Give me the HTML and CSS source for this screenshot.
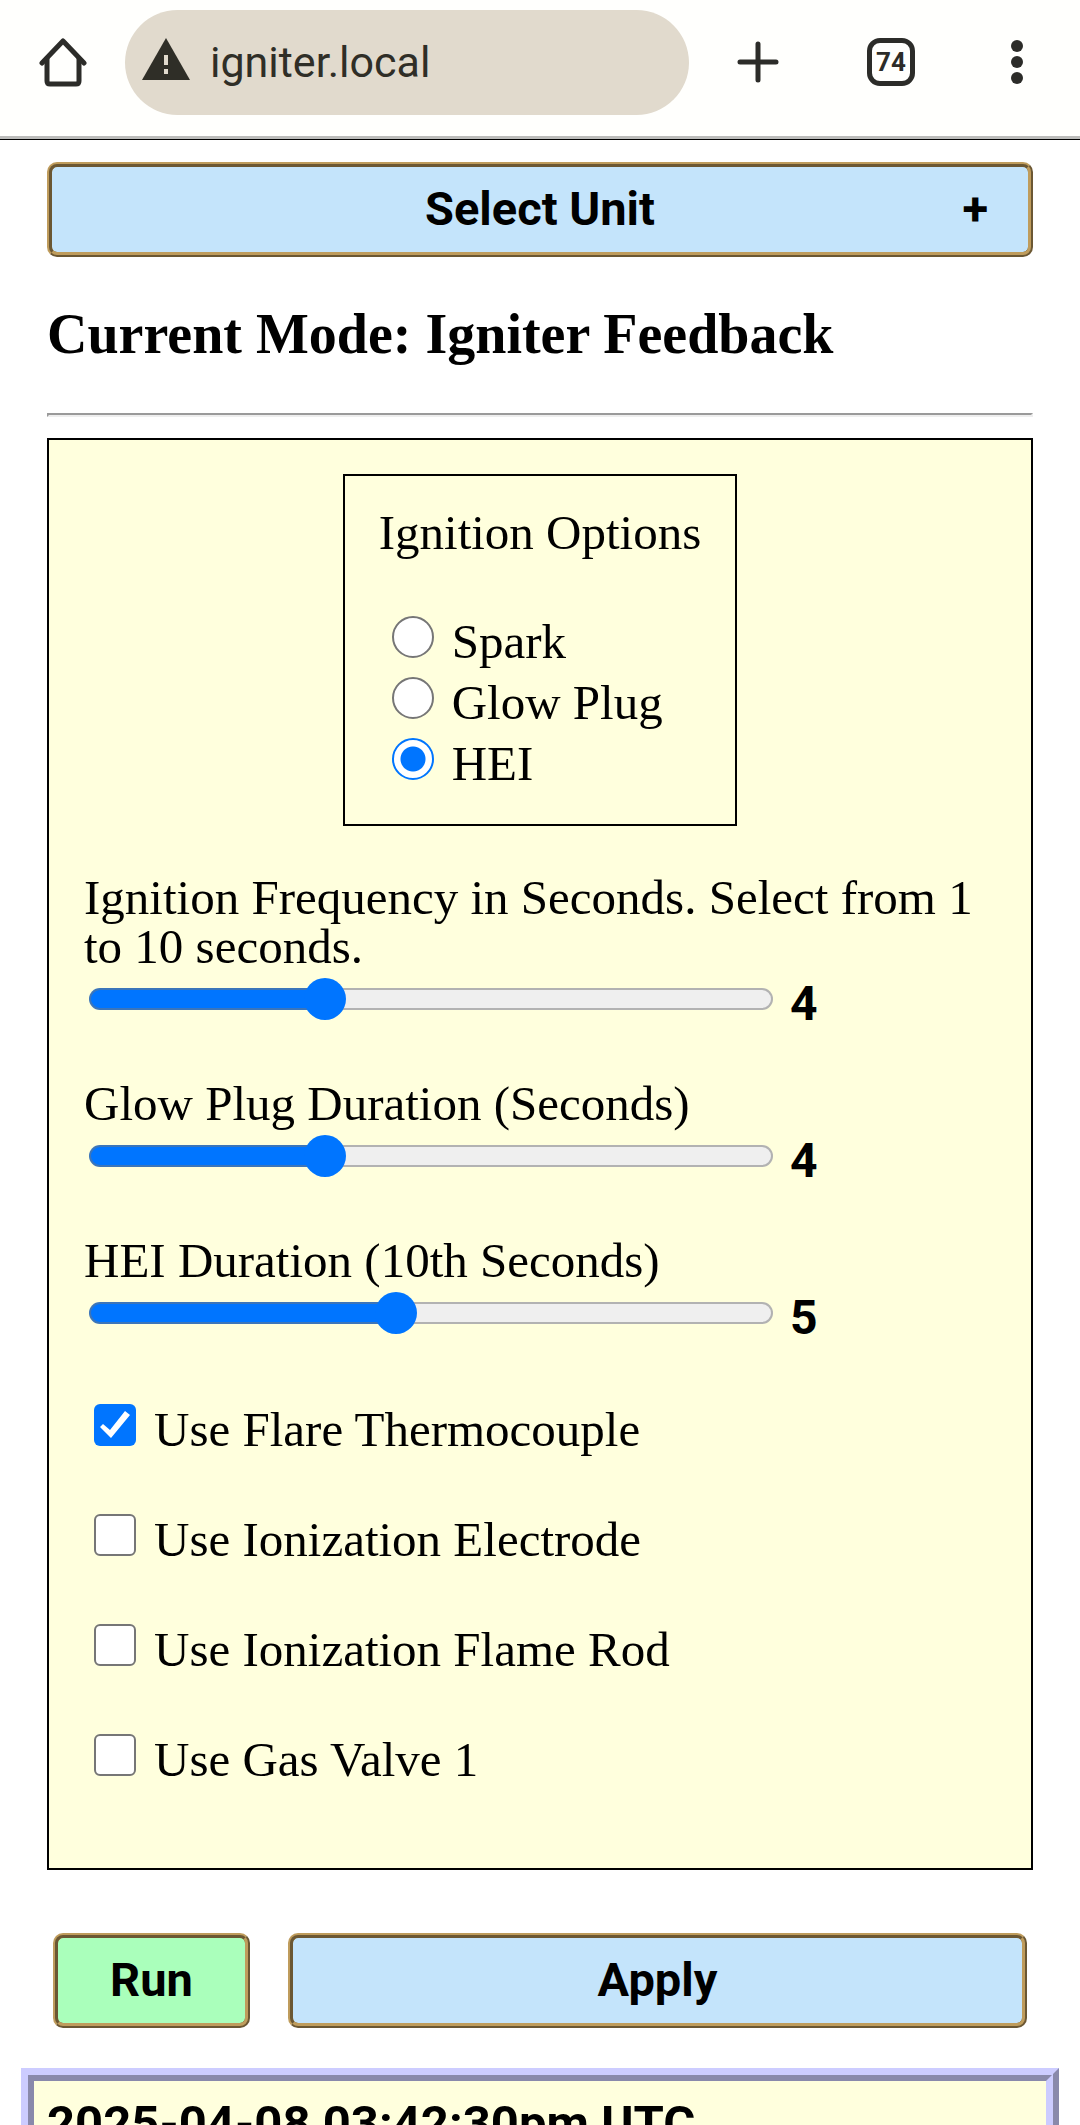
FILE: index.html
```html
<!DOCTYPE html>
<html lang="en">
<head>
  <meta charset="UTF-8">
  <meta name="viewport" content="width=device-width, initial-scale=1.0">
  <title>Igniter</title>
  <link rel="stylesheet" href="styles.css">
</head>
<body>

<header class="toolbar">
  <button class="icon-btn" aria-label="Home">
    <svg width="48" height="50" viewBox="0 0 48 50" fill="none" stroke="#2c2c29" stroke-width="5" stroke-linecap="round" stroke-linejoin="round">
      <path d="M3 26 L24 4 L45 26"/>
      <path d="M8 22 V44 Q8 47 11 47 H37 Q40 47 40 44 V22"/>
    </svg>
  </button>
  <div class="address">
    <svg width="48" height="42" viewBox="0 0 48 42">
      <path d="M24 0 L48 42 H0 Z" fill="#2f2e27"/>
      <path d="M22 17 H26 V27 H22 Z M22 31 H26 V36 H22 Z" fill="#e1dacd"/>
    </svg>
    <span>igniter.local</span>
  </div>
  <div class="actions">
    <button class="icon-btn" aria-label="New tab">
      <svg width="42" height="42" viewBox="0 0 42 42" stroke="#2c2c29" stroke-width="5" stroke-linecap="round">
        <path d="M21 3 V39 M3 21 H39"/>
      </svg>
    </button>
    <button class="icon-btn tabs">74</button>
    <button class="icon-btn menu" aria-label="Menu">
      <svg width="12" height="44" viewBox="0 0 12 44" fill="#2c2c29">
        <circle cx="6" cy="6" r="6"/>
        <circle cx="6" cy="22" r="6"/>
        <circle cx="6" cy="38" r="6"/>
      </svg>
    </button>
  </div>
</header>

<main>
  <!-- Unit selector -->
  <button class="btn select-unit"><span>Select Unit</span><span class="plus">+</span></button>

  <h1>Current Mode: Igniter Feedback</h1>
  <hr>

  <!-- Settings -->
  <form class="panel" id="settings">
    <div class="options" role="radiogroup" aria-labelledby="options-title">
      <div class="options-title" id="options-title">Ignition Options</div>
      <label class="choice"><input type="radio" name="ignition" value="spark">Spark</label>
      <label class="choice"><input type="radio" name="ignition" value="glow">Glow Plug</label>
      <label class="choice"><input type="radio" name="ignition" value="hei" checked>HEI</label>
    </div>

    <div class="slider">
      <label for="freq">Ignition Frequency in Seconds. Select from 1 to 10 seconds.</label>
      <div class="slider-row">
        <input type="range" id="freq" min="1" max="10" value="4" style="--value: 4">
        <output for="freq">4</output>
      </div>
    </div>
    <div class="slider">
      <label for="glow">Glow Plug Duration (Seconds)</label>
      <div class="slider-row">
        <input type="range" id="glow" min="1" max="10" value="4" style="--value: 4">
        <output for="glow">4</output>
      </div>
    </div>
    <div class="slider">
      <label for="hei">HEI Duration (10th Seconds)</label>
      <div class="slider-row">
        <input type="range" id="hei" min="1" max="10" value="5" style="--value: 5">
        <output for="hei">5</output>
      </div>
    </div>

    <div class="checks">
      <label class="choice"><input type="checkbox" checked>Use Flare Thermocouple</label>
      <label class="choice"><input type="checkbox">Use Ionization Electrode</label>
      <label class="choice"><input type="checkbox">Use Ionization Flame Rod</label>
      <label class="choice"><input type="checkbox">Use Gas Valve 1</label>
    </div>
  </form>

  <div class="buttons">
    <button class="btn run">Run</button>
    <button class="btn apply" form="settings">Apply</button>
  </div>
</main>

<div class="log">2025-04-08 03:42:30pm UTC</div>

<script>
  // Keep the number and the filled part of the track in step with the slider
  document.querySelectorAll('input[type="range"]').forEach(r => {
    r.addEventListener("input", () => {
      r.style.setProperty("--value", r.value);
      r.nextElementSibling.textContent = r.value;
    });
  });
</script>

</body>
</html>
```
FILE: styles.css
```css
* {
  box-sizing: border-box;
}

body {
  margin: 0;
  height: 100vh;
  overflow: hidden;
  background: #fff;
  color: #000;
  font-family: "Liberation Serif", serif;
  font-size: 49px;
  line-height: 49px;
}

.toolbar {
  display: flex;
  align-items: center;
  height: 140px;
  padding: 0 57px 15px 39px;
  background: #fffffd;
  border-bottom: 1px solid #000;
  box-shadow: inset 0 -3px #bcbcba;
}

.icon-btn {
  display: flex;
  padding: 0;
  border: none;
  background: none;
  color: #2c2c29;
  cursor: pointer;
}

.address {
  display: flex;
  flex: 1;
  align-items: center;
  gap: 20px;
  height: 105px;
  margin: 0 48px 0 38px;
  padding: 0 17px;
  border-radius: 53px;
  background: #e1dacd;
  color: #2f2e27;
  font-family: Roboto, sans-serif;
  font-size: 43px;
}

.address svg {
  margin-bottom: 6px;
}

.actions {
  display: flex;
  align-items: center;
  gap: 88px;
}

.menu {
  margin-left: 8px;
}

.tabs {
  align-items: center;
  justify-content: center;
  width: 48px;
  height: 48px;
  border: 5px solid #2c2c29;
  border-radius: 13px;
  font: bold 26px Roboto, sans-serif;
}

main {
  padding: 22px 47px 0;
}

.btn {
  height: 95px;
  padding: 0 40px 2px;
  border: 5px ridge #bf9c5c;
  border-radius: 10px;
  background: #c4e4fb;
  color: #000;
  font: bold 47px Roboto, sans-serif;
  cursor: pointer;
}

.select-unit {
  display: grid;
  grid-template-columns: 1fr auto 1fr;
  align-items: center;
  width: 100%;
}

.select-unit span:first-child {
  grid-column: 2;
}

.plus {
  text-align: right;
}

h1 {
  margin: 47px 0 49px;
  font-size: 56px;
  line-height: 60px;
}

hr {
  height: 4px;
  margin: 0 0 21px;
  border: 2px inset #eee;
}

.panel {
  padding: 34px 35px 35px;
  border: 2px solid #000;
  background: #ffffdd;
}

.options {
  width: fit-content;
  margin: 0 auto 47px;
  padding: 32px 34px 36px;
  border: 2px solid #000;
}

.options-title {
  margin-bottom: 48px;
}

.choice {
  display: flex;
  align-items: baseline;
}

.choice input {
  appearance: none;
  flex: none;
  width: 42px;
  height: 42px;
  margin: 11px 18px 0 10px;
  border: 2px solid #767676;
  border-radius: 6px;
  background: #fff;
}

.choice input[type="radio"] {
  margin-left: 13px;
  border-radius: 50%;
}

.choice input[type="radio"]:checked {
  border-color: #0075ff;
  background: radial-gradient(circle, #0075ff 12px, #fff 13px);
}

.choice input[type="checkbox"]:checked {
  border: none;
  background: #0075ff;
}

/* tick mark */
.choice input[type="checkbox"]:checked::before {
  content: "";
  display: block;
  width: 42px;
  height: 42px;
  background: #fff;
  clip-path: polygon(6px 23px, 9px 20px, 16px 26px, 31px 7px, 36px 11px, 17px 34px);
}

.slider {
  margin-bottom: 52px;
}

.slider label {
  display: block;
}

.slider-row {
  display: flex;
  align-items: center;
  gap: 17px;
}

.slider input {
  appearance: none;
  width: 75%;
  height: 42px;
  margin: 0 0 0 5px;
  background: none;
}

.slider input::-webkit-slider-runnable-track {
  height: 22px;
  border: 2px solid rgba(118, 118, 118, 0.5);
  border-radius: 11px;
  background: linear-gradient(#0075ff, #0075ff) no-repeat border-box #efefef;
  background-size: calc((var(--value) - 1) / 9 * (100% - 42px) + 21px) 100%;
}

.slider input::-webkit-slider-thumb {
  appearance: none;
  width: 42px;
  height: 42px;
  margin-top: -12px;
  border-radius: 50%;
  background: #0075ff;
}

.slider output {
  padding-top: 10px;
  font: bold 48px/46px Roboto, sans-serif;
}

.checks {
  display: flex;
  flex-direction: column;
  gap: 49px;
  margin-bottom: 49px;
}

.buttons {
  display: flex;
  gap: 38px;
  margin: 63px 6px 40px;
}

.run {
  width: 197px;
  background: #aaffbb;
}

.apply {
  flex: 1;
}

.log {
  margin: 0 21px;
  padding: 15px 13px;
  border: 13px ridge #ccccff;
  background: #ffffdd;
  font: bold 49px/56px Roboto, sans-serif;
}
```
